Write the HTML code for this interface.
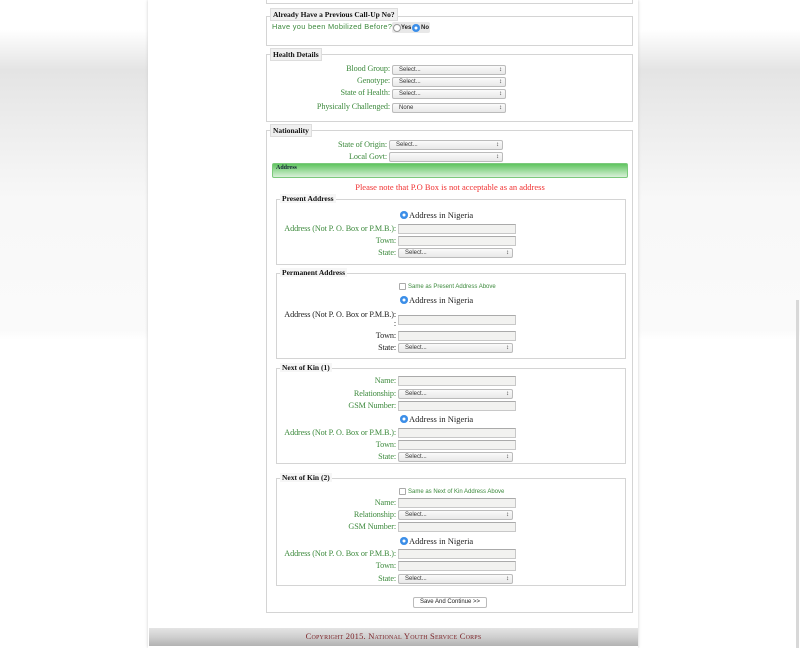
<!DOCTYPE html>
<html><head><meta charset="utf-8"><style>
*{margin:0;padding:0;box-sizing:border-box}
body{width:800px;height:648px;overflow:hidden;position:relative;font-family:"Liberation Serif",serif;
background:linear-gradient(#fff 0,#fff 30px,#e4e4e4 70px,#ececec 120px,#f8f8f8 200px,#fafafa 330px,#fff 340px,#fff 100%)}
.main{position:absolute;left:148px;top:0;width:490px;height:648px;background:#fff;box-shadow:0 0 3px #ccc}
.fs{position:absolute;border:1px solid #d4d4d4}
.lg{position:absolute;font:bold 7.5px "Liberation Serif",serif;color:#111;background:#f0f0f0;border:1px solid #ddd;padding:1px 2px;white-space:nowrap}
.lg2{position:absolute;font:bold 7.5px "Liberation Serif",serif;color:#111;background:#f6f6f6;padding:0 2px;white-space:nowrap}
.lb{position:absolute;font-size:8.2px;letter-spacing:-0.12px;color:#3d8a3d;text-align:right;white-space:nowrap;line-height:10px}
.lbk{color:#222}
.sel{position:absolute;height:10px;border:1px solid #bbb;border-radius:2px;background:linear-gradient(#fafafa,#e8e8e8);font:6px "Liberation Sans",sans-serif;color:#333;padding-left:6px;line-height:8px}
.sel:after{content:"\2195";position:absolute;right:3px;top:0;font-size:6px}
.inp{position:absolute;height:10px;width:118px;border:1px solid #c8c8c8;border-top-color:#aaa;background:#f2f2f0}
.rad{position:absolute;width:8px;height:8px;border-radius:50%;background:#3b8ee8;box-shadow:inset 0 0 0 2.5px #3b8ee8,inset 0 0 0 4px #fff}
.rt{position:absolute;font-size:8.5px;color:#222;line-height:10px;white-space:nowrap}
.cb{position:absolute;width:7px;height:7px;border:1px solid #aaa;border-radius:1px;background:#fff}
.ct{position:absolute;font:6px "Liberation Sans",sans-serif;color:#3d8a3d;white-space:nowrap;line-height:8px}
</style></head><body>
<div style="position:absolute;right:1px;top:300px;width:3px;height:348px;background:#d8d8d8"></div>
<div class="main"></div>
<div class="fs" style="left:266px;top:-5px;width:367px;height:9px"></div>

<div class="fs" style="left:266px;top:16px;width:367px;height:30px"></div>
<div class="lg" style="left:270px;top:8px">Already Have a Previous Call-Up No?</div>
<div class="ct" style="left:272px;top:22px;font-size:7.4px;line-height:10px;letter-spacing:0.3px">Have you been Mobilized Before?</div>
<div style="position:absolute;left:392px;top:22px;width:38px;height:11px;background:#e8e8e8;border-radius:2px"></div>
<div style="position:absolute;left:393px;top:24px;width:8px;height:8px;border-radius:50%;border:1px solid #999;background:#fff"></div>
<div class="ct" style="left:401px;top:24px;font-size:6px;color:#222;font-weight:bold">Yes</div>
<div class="rad" style="left:412px;top:24px"></div>
<div class="ct" style="left:421px;top:24px;font-size:6px;color:#222;font-weight:bold">No</div>

<div class="fs" style="left:266px;top:54px;width:367px;height:68px"></div>
<div class="lg" style="left:270px;top:48px">Health Details</div>
<div class="lb" style="left:280px;width:110px;top:64px">Blood Group:</div><div class="sel" style="left:392px;top:65px;width:114px">Select...</div>
<div class="lb" style="left:280px;width:110px;top:76px">Genotype:</div><div class="sel" style="left:392px;top:77px;width:114px">Select...</div>
<div class="lb" style="left:280px;width:110px;top:88px">State of Health:</div><div class="sel" style="left:392px;top:89px;width:114px">Select...</div>
<div class="lb" style="left:280px;width:110px;top:102px">Physically Challenged:</div><div class="sel" style="left:392px;top:103px;width:114px">None</div>

<div class="fs" style="left:266px;top:130px;width:367px;height:483px"></div>
<div class="lg" style="left:270px;top:124px">Nationality</div>
<div class="lb" style="left:280px;width:107px;top:140px">State of Origin:</div><div class="sel" style="left:389px;top:140px;width:114px">Select...</div>
<div class="lb" style="left:280px;width:107px;top:152px">Local Govt:</div><div class="sel" style="left:389px;top:152px;width:114px"></div>
<div style="position:absolute;left:272px;top:163px;width:356px;height:15px;border:1px solid #7cc97c;border-radius:2px;background:linear-gradient(#5fc45f,#a8e0a8 60%,#d8f0d8)"></div>
<div style="position:absolute;left:276px;top:165px;font:bold 6px 'Liberation Serif',serif;color:#123">Address</div>
<div style="position:absolute;left:272px;width:356px;top:182px;text-align:center;font-size:8.5px;color:#f03030">Please note that P.O Box is not acceptable as an address</div>

<!-- Present -->
<div class="fs" style="left:276px;top:199px;width:350px;height:66px"></div>
<div class="lg2" style="left:280px;top:194px">Present Address</div>
<div class="rad" style="left:400px;top:211px"></div><div class="rt" style="left:409px;top:210px">Address in Nigeria</div>
<div class="lb" style="left:276px;width:120px;top:224px">Address (Not P. O. Box or P.M.B.):</div><div class="inp" style="left:398px;top:224px"></div>
<div class="lb" style="left:276px;width:120px;top:236px">Town:</div><div class="inp" style="left:398px;top:236px"></div>
<div class="lb" style="left:276px;width:120px;top:248px">State:</div><div class="sel" style="left:398px;top:248px;width:115px">Select...</div>

<!-- Permanent -->
<div class="fs" style="left:276px;top:273px;width:350px;height:86px"></div>
<div class="lg2" style="left:280px;top:268px">Permanent Address</div>
<div class="cb" style="left:399px;top:283px"></div><div class="ct" style="left:408px;top:283px">Same as Present Address Above</div>
<div class="rad" style="left:400px;top:296px"></div><div class="rt" style="left:409px;top:295px">Address in Nigeria</div>
<div class="lb lbk" style="left:276px;width:120px;top:310px">Address (Not P. O. Box or P.M.B.):</div><div class="lb lbk" style="left:276px;width:120px;top:319px">:</div><div class="inp" style="left:398px;top:315px"></div>
<div class="lb lbk" style="left:276px;width:120px;top:331px">Town:</div><div class="inp" style="left:398px;top:331px"></div>
<div class="lb lbk" style="left:276px;width:120px;top:343px">State:</div><div class="sel" style="left:398px;top:343px;width:115px">Select...</div>

<!-- NOK1 -->
<div class="fs" style="left:276px;top:368px;width:350px;height:96px"></div>
<div class="lg2" style="left:280px;top:363px">Next of Kin (1)</div>
<div class="lb" style="left:276px;width:120px;top:376px">Name:</div><div class="inp" style="left:398px;top:376px"></div>
<div class="lb" style="left:276px;width:120px;top:389px">Relationship:</div><div class="sel" style="left:398px;top:389px;width:115px">Select...</div>
<div class="lb" style="left:276px;width:120px;top:401px">GSM Number:</div><div class="inp" style="left:398px;top:401px"></div>
<div class="rad" style="left:400px;top:415px"></div><div class="rt" style="left:409px;top:414px">Address in Nigeria</div>
<div class="lb" style="left:276px;width:120px;top:428px">Address (Not P. O. Box or P.M.B.):</div><div class="inp" style="left:398px;top:428px"></div>
<div class="lb" style="left:276px;width:120px;top:440px">Town:</div><div class="inp" style="left:398px;top:440px"></div>
<div class="lb" style="left:276px;width:120px;top:452px">State:</div><div class="sel" style="left:398px;top:452px;width:115px">Select...</div>

<!-- NOK2 -->
<div class="fs" style="left:276px;top:478px;width:350px;height:108px"></div>
<div class="lg2" style="left:280px;top:473px">Next of Kin (2)</div>
<div class="cb" style="left:399px;top:488px"></div><div class="ct" style="left:408px;top:488px">Same as Next of Kin Address Above</div>
<div class="lb" style="left:276px;width:120px;top:498px">Name:</div><div class="inp" style="left:398px;top:498px"></div>
<div class="lb" style="left:276px;width:120px;top:510px">Relationship:</div><div class="sel" style="left:398px;top:510px;width:115px">Select...</div>
<div class="lb" style="left:276px;width:120px;top:522px">GSM Number:</div><div class="inp" style="left:398px;top:522px"></div>
<div class="rad" style="left:400px;top:537px"></div><div class="rt" style="left:409px;top:536px">Address in Nigeria</div>
<div class="lb" style="left:276px;width:120px;top:549px">Address (Not P. O. Box or P.M.B.):</div><div class="inp" style="left:398px;top:549px"></div>
<div class="lb" style="left:276px;width:120px;top:561px">Town:</div><div class="inp" style="left:398px;top:561px"></div>
<div class="lb" style="left:276px;width:120px;top:574px">State:</div><div class="sel" style="left:398px;top:574px;width:115px">Select...</div>

<div style="position:absolute;left:413px;top:597px;width:74px;height:11px;border:1px solid #bbb;border-radius:2px;background:#fff;font:6px 'Liberation Sans',sans-serif;color:#222;text-align:center;line-height:9px">Save And Continue &gt;&gt;</div>

<div style="position:absolute;left:149px;top:628px;width:489px;height:18px;background:linear-gradient(#e4e4e4,#cfcfcf 50%,#b2b2b2)"></div>
<div style="position:absolute;left:149px;top:631px;width:489px;text-align:center;font:8.5px 'Liberation Serif',serif;font-variant:small-caps;color:#7a1f24;letter-spacing:.2px">Copyright 2015. National Youth Service Corps</div>
</body></html>
